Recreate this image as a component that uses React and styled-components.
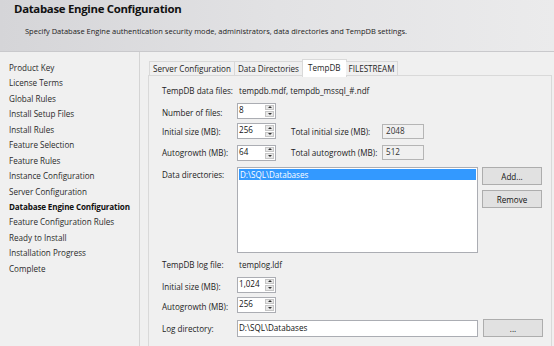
import React from 'react';
import styled, { createGlobalStyle } from 'styled-components';

const GlobalStyle = createGlobalStyle`
  html, body { margin: 0; padding: 0; }
  body {
    width: 554px;
    height: 346px;
    overflow: hidden;
    background: #f0f0f0;
    font-family: "Open Sans", "Noto Sans", sans-serif;
    font-size: 8.1px;
    color: #1e1e1e;
  }
`;

const steps = [
  'Product Key',
  'License Terms',
  'Global Rules',
  'Install Setup Files',
  'Install Rules',
  'Feature Selection',
  'Feature Rules',
  'Instance Configuration',
  'Server Configuration',
  'Database Engine Configuration',
  'Feature Configuration Rules',
  'Ready to Install',
  'Installation Progress',
  'Complete'
];

const tabs = ['Server Configuration', 'Data Directories', 'TempDB', 'FILESTREAM'];

export default function App() {
  return (
    <Window>
      <GlobalStyle />
      <Header>
        <Title>Database Engine Configuration</Title>
        <Subtitle>
          Specify Database Engine authentication security mode, administrators, data directories and TempDB settings.
        </Subtitle>
      </Header>
      <Body>
        <Sidebar>
          {steps.map(s => (
            <Step key={s} active={s === 'Database Engine Configuration'}>{s}</Step>
          ))}
        </Sidebar>
        <Main>
          <TabStrip>
            {tabs.map(t => (
              <Tab key={t} selected={t === 'TempDB'}>{t}</Tab>
            ))}
          </TabStrip>
          <Panel>
            <Row h={14} mt={7}>
              <Label>TempDB data files:</Label>
              <Value>tempdb.mdf, tempdb_mssql_#.ndf</Value>
            </Row>
            <Row h={17} mt={5}>
              <Label low>Number of files:</Label>
              <Spinner value="8" />
            </Row>
            <Row h={16} mt={4}>
              <Label>Initial size (MB):</Label>
              <Spinner value="256" />
              <TotalLabel>Total initial size (MB):</TotalLabel>
              <ReadOnlyBox>2048</ReadOnlyBox>
            </Row>
            <Row h={17} mt={5}>
              <Label>Autogrowth (MB):</Label>
              <Spinner value="64" />
              <TotalLabel>Total autogrowth (MB):</TotalLabel>
              <ReadOnlyBox>512</ReadOnlyBox>
            </Row>
            <DirRow>
              <Label top>Data directories:</Label>
              <ListBox>
                <ListItem selected>D:\SQL\Databases</ListItem>
              </ListBox>
              <ButtonColumn>
                <Button>Add...</Button>
                <Button>Remove</Button>
              </ButtonColumn>
            </DirRow>
            <Row h={14} mt={4}>
              <Label>TempDB log file:</Label>
              <Value>templog.ldf</Value>
            </Row>
            <Row h={17} mt={5}>
              <Label low>Initial size (MB):</Label>
              <Spinner value="1,024" />
            </Row>
            <Row h={17} mt={3}>
              <Label low>Autogrowth (MB):</Label>
              <Spinner value="256" />
            </Row>
            <Row h={18} mt={6}>
              <Label>Log directory:</Label>
              <PathBox>D:\SQL\Databases</PathBox>
              <Button wide>...</Button>
            </Row>
          </Panel>
        </Main>
      </Body>
    </Window>
  );
}

function Spinner({ value }) {
  return (
    <SpinBox>
      <SpinText>{value}</SpinText>
      <SpinButtons>
        <SpinBtn><Arrow up /></SpinBtn>
        <SpinBtn><Arrow /></SpinBtn>
      </SpinButtons>
    </SpinBox>
  );
}

const Window = styled.div`
  width: 554px;
  height: 346px;
  display: flex;
  flex-direction: column;
`;

const Header = styled.div`
  height: 52px;
  box-sizing: border-box;
  padding: 0 0 0 14px;
  background: linear-gradient(90deg, #d5d5d8 0%, #e2e2e4 50%, #ebebec 100%);
  border-bottom: 1px solid #c9c9cc;
`;

const Title = styled.div`
  font-size: 11.4px;
  font-weight: 700;
  color: #111;
  line-height: 18px;
  letter-spacing: -0.3px;
`;

const Subtitle = styled.div`
  margin: 8px 0 0 11px;
  font-size: 7.5px;
  color: #222;
  line-height: 11px;
`;

const Body = styled.div`
  flex: 1;
  display: flex;
  min-height: 0;
`;

const Sidebar = styled.div`
  width: 142px;
  border-right: 1px solid #d4d4d4;
  padding: 8px 0 0 9px;
  box-sizing: border-box;
  background: #f0f0f0;
`;

const Step = styled.div`
  height: 15.45px;
  line-height: 15.45px;
  white-space: nowrap;
  font-weight: ${p => (p.active ? 700 : 400)};
  color: ${p => (p.active ? '#111' : '#2a2a2a')};
  letter-spacing: ${p => (p.active ? '-0.15px' : '0')};
`;

const Main = styled.div`
  flex: 1;
  padding: 7px 2px 0 8px;
  display: flex;
  flex-direction: column;
`;

const TabStrip = styled.div`
  display: flex;
  align-items: flex-end;
  height: 17px;
  padding-left: 1px;
  position: relative;
  z-index: 1;
`;

const Tab = styled.div`
  box-sizing: border-box;
  height: ${p => (p.selected ? '18px' : '15px')};
  line-height: ${p => (p.selected ? '15px' : '13px')};
  padding: 0 ${p => (p.selected ? '5px' : '3px')};
  margin: ${p => (p.selected ? '0 -1px -1px -1px' : '0')};
  border: 1px solid #d9d9d9;
  border-bottom: ${p => (p.selected ? 'none' : '1px solid #d9d9d9')};
  border-left-width: ${p => (p.selected ? '1px' : '0')};
  background: ${p => (p.selected ? '#ffffff' : '#f0f0f0')};
  white-space: nowrap;
  &:first-child { border-left-width: 1px; }
`;

const Panel = styled.div`
  flex: 1;
  border: 1px solid #d9d9d9;
  border-bottom: none;
  margin-top: -1px;
  padding: 0 8px 0 13px;
  background: #f0f0f0;
`;

const Row = styled.div`
  display: flex;
  align-items: center;
  height: ${p => p.h}px;
  margin-top: ${p => p.mt}px;
`;

const Label = styled.div`
  width: 75px;
  flex: none;
  white-space: nowrap;
  align-self: ${p => (p.top ? 'flex-start' : 'center')};
  margin-top: ${p => (p.top ? '2px' : p.low ? '4px' : '0')};
  color: #222;
`;

const Value = styled.div`
  margin-left: 2px;
  color: #222;
`;

const SpinBox = styled.div`
  display: flex;
  width: 39px;
  height: 16px;
  box-sizing: border-box;
  border: 1px solid #abadb3;
  background: #fff;
`;

const SpinText = styled.div`
  flex: 1;
  padding-left: 1px;
  line-height: 12px;
  color: #111;
`;

const SpinButtons = styled.div`
  width: 9px;
  display: flex;
  flex-direction: column;
  gap: 1px;
  padding: 1px 1px 1px 0;
`;

const SpinBtn = styled.div`
  flex: 1;
  background: #e8e8e8;
  border: 1px solid #c6c6c6;
  display: flex;
  align-items: center;
  justify-content: center;
`;

const Arrow = styled.span`
  width: 0;
  height: 0;
  border-left: 2px solid transparent;
  border-right: 2px solid transparent;
  ${p => (p.up ? 'border-bottom: 2px solid #333;' : 'border-top: 2px solid #333;')}
`;

const TotalLabel = styled.div`
  margin-left: 15px;
  width: 91px;
  white-space: nowrap;
  color: #222;
`;

const ReadOnlyBox = styled.div`
  width: 42px;
  height: 15px;
  box-sizing: border-box;
  border: 1px solid #b5b5b5;
  background: #f0f0f0;
  padding-left: 3px;
  line-height: 12px;
  color: #333;
`;

const DirRow = styled.div`
  display: flex;
  margin-top: 6px;
  height: 86px;
`;

const ListBox = styled.div`
  width: 241px;
  height: 86px;
  box-sizing: border-box;
  border: 1px solid #abadb3;
  background: #fff;
  padding: 1px;
`;

const ListItem = styled.div`
  height: 11px;
  line-height: 11px;
  padding-left: 1px;
  background: ${p => (p.selected ? '#3399ff' : 'transparent')};
  color: ${p => (p.selected ? '#fff' : '#111')};
`;

const ButtonColumn = styled.div`
  margin-left: 4px;
  display: flex;
  flex-direction: column;
  gap: 5px;
`;

const Button = styled.div`
  width: 60px;
  height: 18px;
  box-sizing: border-box;
  border: 1px solid #adadad;
  background: #e1e1e1;
  display: flex;
  align-items: center;
  justify-content: center;
  color: #111;
  margin-left: ${p => (p.wide ? '5px' : '0')};
`;

const PathBox = styled.div`
  width: 241px;
  height: 17px;
  box-sizing: border-box;
  border: 1px solid #abadb3;
  background: #fff;
  padding-left: 1px;
  line-height: 14px;
  color: #111;
`;
